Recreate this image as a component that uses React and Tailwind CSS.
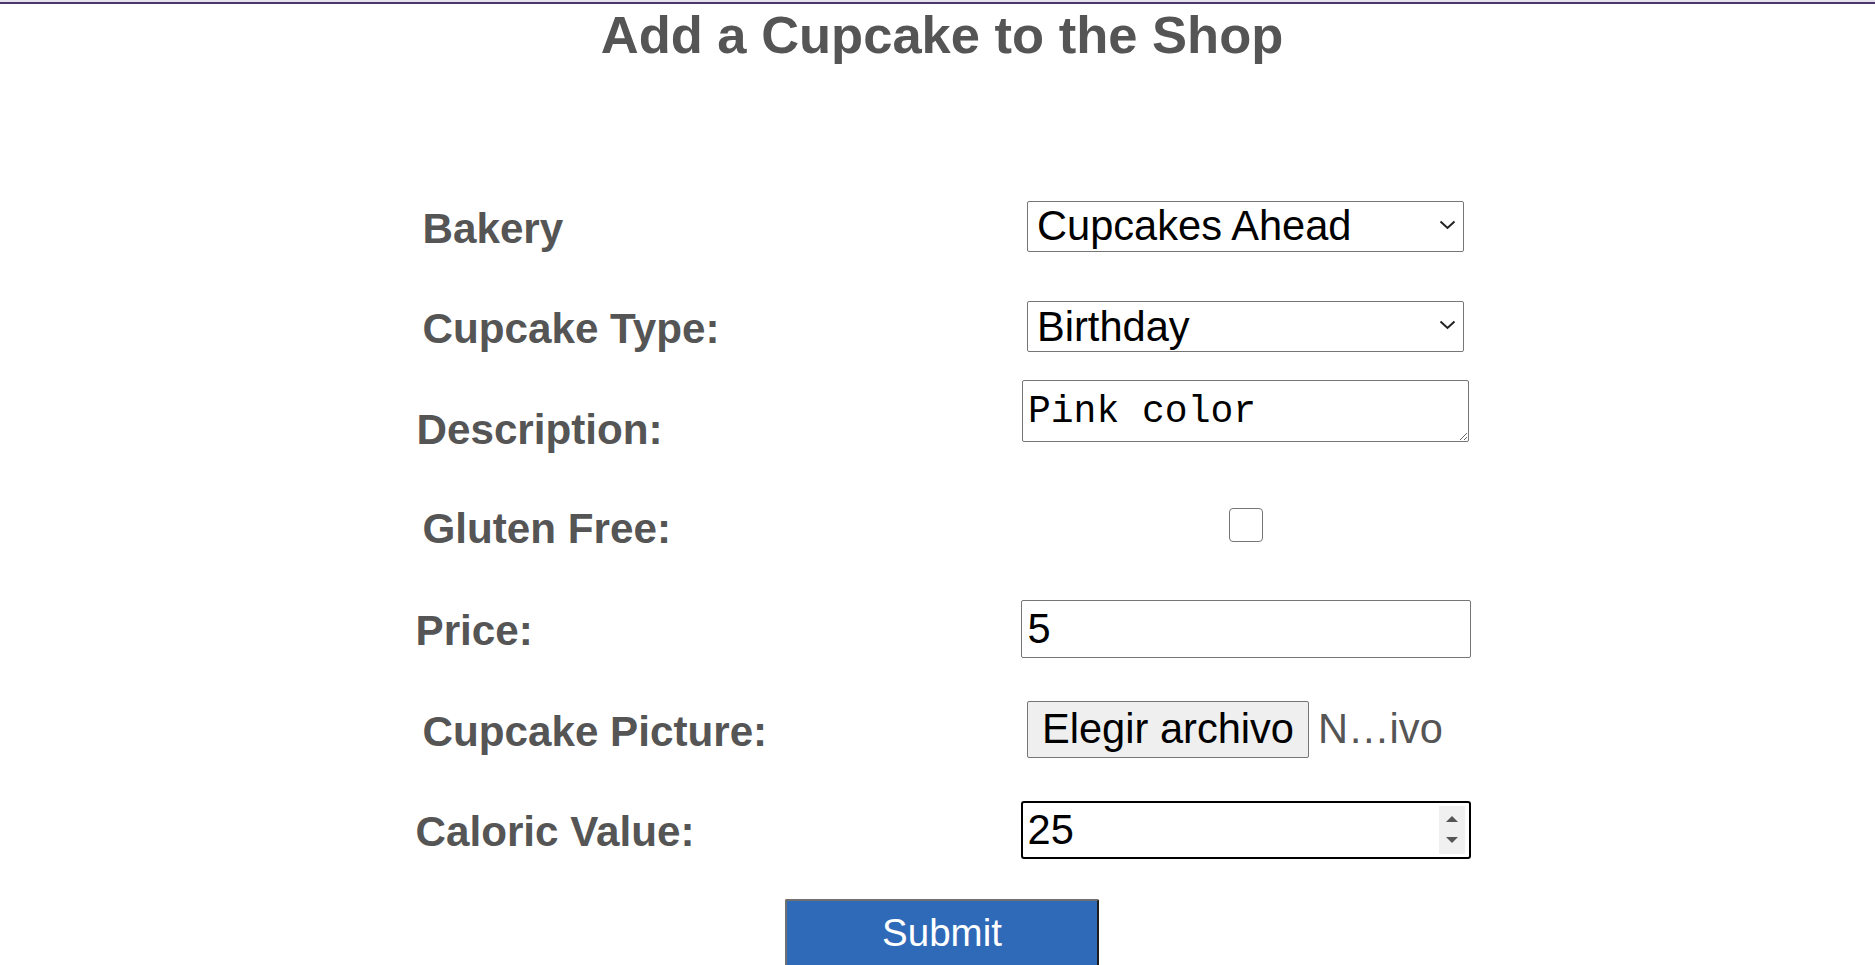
import React from "react";

function Row({ rowClass, label, labelClass, controlClass, children }) {
  return (
    <div className={rowClass}>
      <div className={labelClass}>{label}</div>
      <div className={controlClass}>{children}</div>
    </div>
  );
}

function Chevron() {
  return (
    <svg width="17" height="10" viewBox="0 0 17 10" className="mb-[3px] shrink-0">
      <path d="M1.5 1.5 L8.5 8 L15.5 1.5" fill="none" stroke="#222" strokeWidth="2" />
    </svg>
  );
}

export default function App() {
  const labelA =
    "w-[607px] pl-[9px] mt-[5px] text-[42.2px] font-bold leading-[normal] text-[#555]";
  const labelB =
    "w-[607px] pl-[2px] mt-[5px] text-[42.2px] font-bold leading-[normal] text-[#555]";
  const ctrl = "flex w-[450px] justify-center";
  return (
    <div className="h-[965px] overflow-hidden bg-white font-['Liberation_Sans',Arial,sans-serif]">
      <div className="h-[2px] bg-[#e6e1ec]" />
      <div className="h-[2px] bg-[#4a3868]" />
      <div className="pl-[9px]">
        <h1 className="text-center text-[52.5px] font-bold leading-[normal] text-[#555]">
          Add a Cupcake to the Shop
        </h1>

        <form className="mx-auto mt-[111px] flex w-[1057px] flex-col">
          <Row
            rowClass="flex h-[100px] items-center"
            label="Bakery"
            labelClass={labelA}
            controlClass={ctrl}
          >
            <div className="flex h-[51px] w-[437px] items-center justify-between rounded-[2px] border border-[#767676] bg-white pl-[9px] pr-[7px] text-[41.6px] leading-[normal] text-black">
              <span>Cupcakes Ahead</span>
              <Chevron />
            </div>
          </Row>

          <Row
            rowClass="flex h-[101px] items-center"
            label="Cupcake Type:"
            labelClass={labelA}
            controlClass={ctrl}
          >
            <div className="flex h-[51px] w-[437px] items-center justify-between rounded-[2px] border border-[#767676] bg-white pl-[9px] pr-[7px] text-[41.6px] leading-[normal] text-black">
              <span>Birthday</span>
              <Chevron />
            </div>
          </Row>

          <Row
            rowClass="flex h-[97px] items-center"
            label="Description:"
            labelClass="w-[607px] pl-[3px] mt-[8px] text-[42.2px] font-bold leading-[normal] text-[#555]"
            controlClass="flex w-[450px] justify-center self-start pt-[3px]"
          >
            <textarea
              defaultValue="Pink color"
              className="block h-[62px] w-[447px] resize overflow-hidden rounded-[2px] border border-[#767676] px-[5px] pt-[9px] font-['Liberation_Mono',monospace] text-[38px] leading-[normal] text-black"
            />
          </Row>

          <Row
            rowClass="flex h-[102px] items-center"
            label="Gluten Free:"
            labelClass="w-[607px] pl-[9px] mt-[7px] text-[42.2px] font-bold leading-[normal] text-[#555]"
            controlClass={ctrl}
          >
            <div className="h-[34px] w-[34px] rounded-[4px] border border-[#767676] bg-white" />
          </Row>

          <Row
            rowClass="flex h-[105px] items-center"
            label="Price:"
            labelClass={labelB}
            controlClass={ctrl}
          >
            <div className="flex h-[58px] w-[450px] items-center rounded-[2px] border border-[#767676] pl-[6px] text-[41.6px] leading-[normal] text-black">
              5
            </div>
          </Row>

          <Row
            rowClass="flex h-[96px] items-center"
            label="Cupcake Picture:"
            labelClass={labelA}
            controlClass={ctrl}
          >
            <div className="flex w-[437px] items-center">
              <div className="flex h-[57px] items-center rounded-[2px] border border-[#767676] bg-[#efefef] px-[14px] text-[41.6px] leading-[normal] text-black">
                Elegir archivo
              </div>
              <span className="ml-[9px] text-[41.6px] leading-[normal] text-[#555]">
                N…ivo
              </span>
            </div>
          </Row>

          <Row
            rowClass="flex h-[105px] items-center"
            label="Caloric Value:"
            labelClass={labelB}
            controlClass={ctrl}
          >
            <div className="flex h-[58px] w-[450px] items-center justify-between rounded-[3px] border-2 border-black pl-[5px] pr-[4px] text-[41.6px] leading-[normal] text-black">
              <span>25</span>
              <div className="flex h-[48px] w-[26px] flex-col items-center justify-center gap-[15px] bg-[#f0f0f0]">
                <svg width="12" height="6" viewBox="0 0 12 6">
                  <path d="M0 6 L6 0 L12 6 Z" fill="#555" />
                </svg>
                <svg width="12" height="6" viewBox="0 0 12 6">
                  <path d="M0 0 L6 6 L12 0 Z" fill="#555" />
                </svg>
              </div>
            </div>
          </Row>
        </form>

        <div className="mt-[17px] flex justify-center">
          <button
            type="button"
            className="h-[68px] w-[314px] rounded-t-[2px] border-2 border-[#707070] border-r-[#1e1e1e] border-b-[#1e1e1e] bg-[#2e6ab8] text-[38.5px] leading-[normal] text-white"
          >
            Submit
          </button>
        </div>
      </div>
    </div>
  );
}
